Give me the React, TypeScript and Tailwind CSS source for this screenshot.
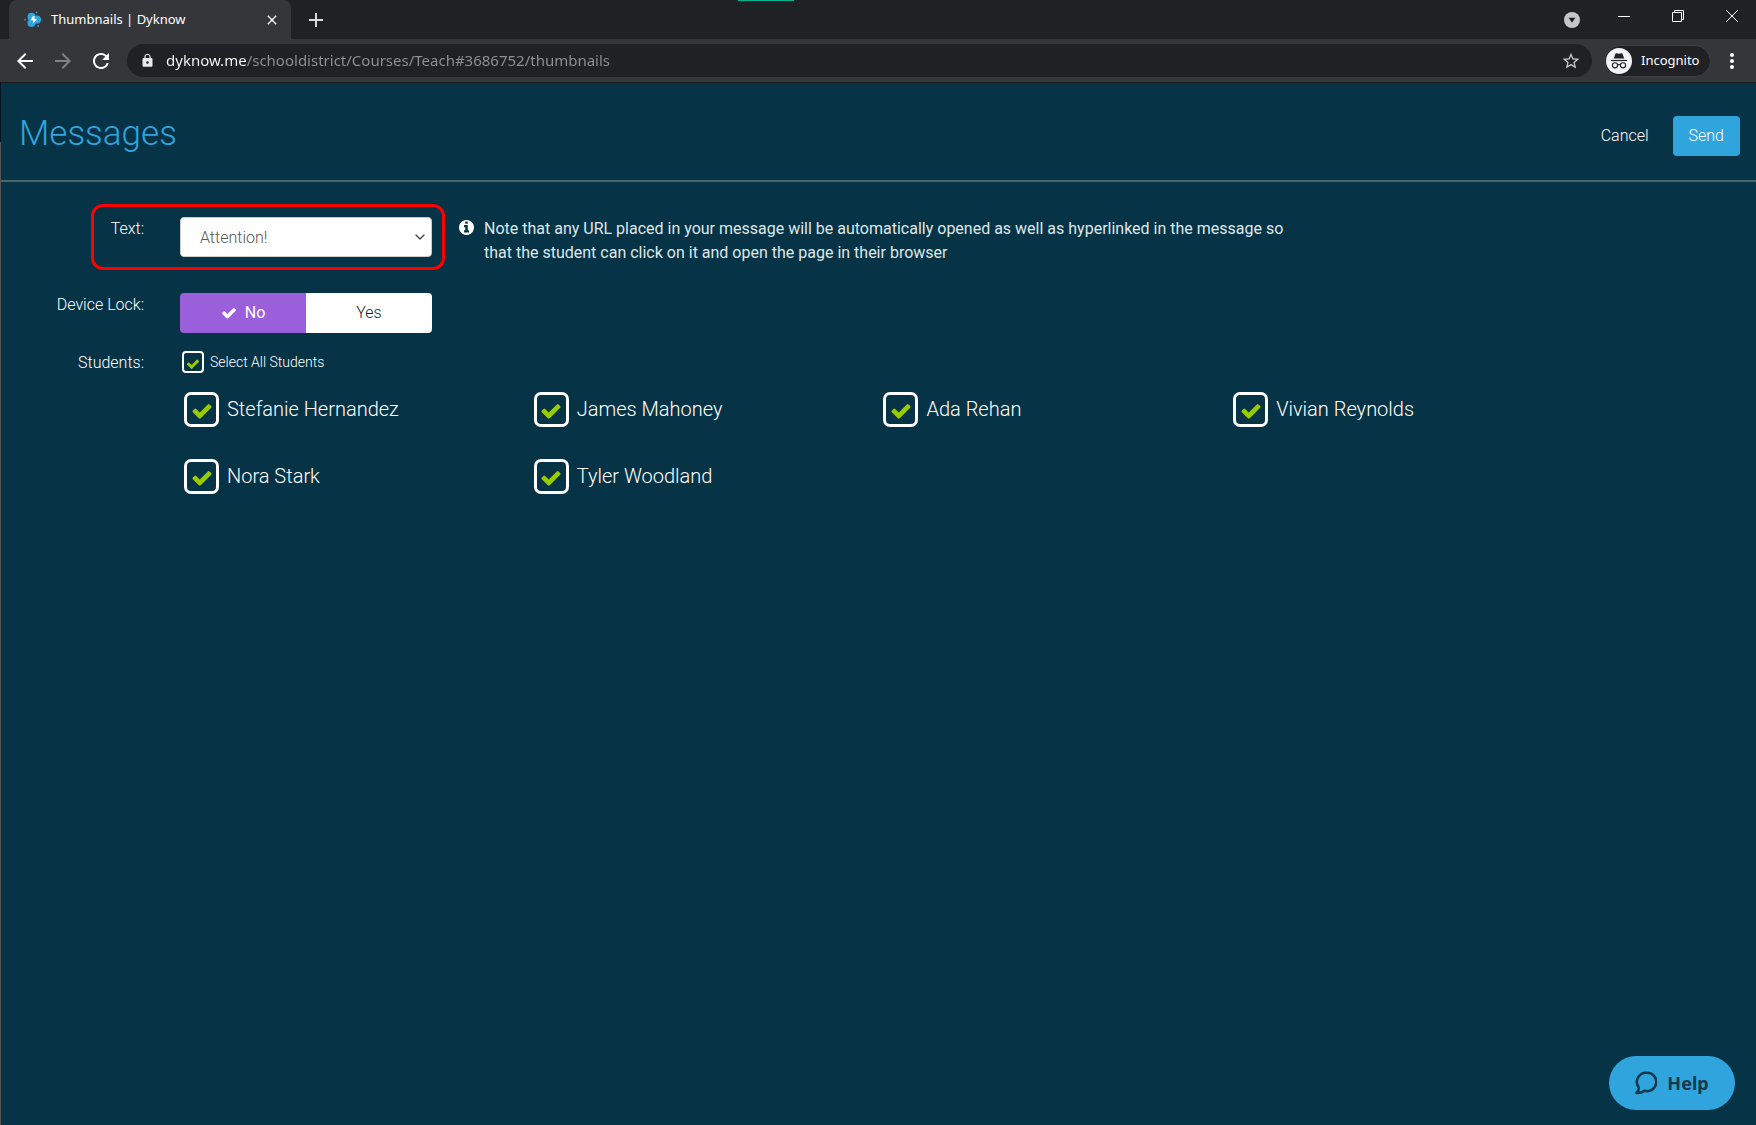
import React, { useState } from 'react'
import { ChevronDown } from 'lucide-react'
import { MdAdd, MdArrowBack, MdArrowForward, MdClose, MdLock, MdMoreVert, MdRefresh, MdStarBorder } from 'react-icons/md'

interface IconProps {
  className?: string;
}

const CheckIcon: React.FC<IconProps> = ({ className }) => (
  <svg viewBox="0 0 1792 1792" fill="currentColor" className={className} aria-hidden="true">
    <path d="M1671 566q0 40-28 68l-724 724-136 136q-28 28-68 28t-68-28l-136-136-362-362q-28-28-28-68t28-68l136-136q28-28 68-28t68 28l294 295 656-657q28-28 68-28t68 28l136 136q28 28 28 68z" />
  </svg>
);

const InfoIcon: React.FC<IconProps> = ({ className }) => (
  <svg viewBox="128 128 1536 1536" fill="currentColor" className={className} aria-hidden="true">
    <path d="M1152 1376v-160q0-14-9-23t-23-9h-96v-512q0-14-9-23t-23-9h-320q-14 0-23 9t-9 23v160q0 14 9 23t23 9h96v320h-96q-14 0-23 9t-9 23v160q0 14 9 23t23 9h448q14 0 23-9t9-23zm-128-896v-160q0-14-9-23t-23-9h-192q-14 0-23 9t-9 23v160q0 14 9 23t23 9h192q14 0 23-9t9-23zm640 416q0 209-103 385.5t-279.5 279.5-385.5 103-385.5-103-279.5-279.5-103-385.5 103-385.5 279.5-279.5 385.5-103 385.5 103 279.5 279.5 103 385.5z" />
  </svg>
);

const DyknowLogo: React.FC<IconProps> = ({ className }) => (
  <svg viewBox="0 0 18 18" className={className} aria-hidden="true">
    <g fill="#2fa4dd">
      <circle cx="7.5" cy="5.8" r="4" />
      <circle cx="13" cy="8.6" r="4.2" />
      <circle cx="7.5" cy="12" r="4" />
      <circle cx="12.5" cy="1.4" r="0.9" />
      <circle cx="1.2" cy="8.6" r="0.9" />
      <circle cx="14.2" cy="15" r="0.9" />
    </g>
    <path d="M9.2 4.8L6.4 9.2l3 .4-.6 3.2 4.2-4.4-2.8-.6.6-2.6z" fill="#fff" />
  </svg>
);

const IncognitoIcon: React.FC<IconProps> = ({ className }) => (
  <svg viewBox="0 0 26 26" className={className} aria-hidden="true">
    <circle cx="13" cy="13" r="13" fill="#f1f3f4" />
    <path d="M9.6 5.6q.2-.6.9-.4l2.5.6 2.5-.6q.7-.2.9.4l1.8 5H7.8z" fill="#202124" />
    <path d="M5 12.5h16" stroke="#202124" strokeWidth="1.2" />
    <g fill="none" stroke="#202124" strokeWidth="1.1">
      <circle cx="9" cy="17.3" r="2.6" />
      <circle cx="17" cy="17.3" r="2.6" />
      <path d="M11.6 17q1.4-.9 2.8 0" />
    </g>
  </svg>
);

const BrowserChrome: React.FC = () => {
  return (
    <header className="text-white font-['Noto_Sans',sans-serif]">
      <div className="relative flex h-[39px] bg-[#202124] pl-[9px]">
        <div className="absolute left-[42%] top-0 h-px w-14 bg-[#00b294]" />
        <div className="flex w-[282px] items-center rounded-t-lg bg-[#35363a] pl-[15px] pr-[11px]">
          <DyknowLogo className="size-[18px]" />
          <span className="ml-[9px] flex-1 text-[13px]">Thumbnails | Dyknow</span>
          <button aria-label="Close tab"><MdClose className="size-4" /></button>
        </div>
        <button aria-label="New tab" className="ml-[13px] text-[#dadce0]"><MdAdd className="size-6" /></button>
        <div className="ml-auto flex">
          <button aria-label="Search tabs" className="mr-3 px-2">
            <svg viewBox="0 0 16 16" className="size-4">
              <circle cx="8" cy="8" r="8" fill="#c4c7ca" />
              <path d="M4.6 5.8h6.8L8 10.8z" fill="#202124" />
            </svg>
          </button>
          <button aria-label="Minimize" className="flex w-12 justify-center pt-[10px]">
            <svg viewBox="0 0 12 12" className="size-3"><path d="M0 6.5h12" stroke="#fff" /></svg>
          </button>
          <button aria-label="Restore" className="flex w-[59px] justify-center pt-[10px]">
            <svg viewBox="0 0 12 12" className="size-3" fill="none" stroke="#fff">
              <path d="M.5 2.5h9v9h-9zM2.5 2.5v-2h9v9h-2" />
            </svg>
          </button>
          <button aria-label="Close" className="flex w-[49px] justify-center pt-[10px]">
            <svg viewBox="0 0 12 12" className="size-3"><path d="M0 0l12 12M12 0L0 12" stroke="#fff" /></svg>
          </button>
        </div>
      </div>
      <div className="flex h-11 items-center border-b border-[#1c1d20] bg-[#35363a] pl-[13px] pr-3">
        <button aria-label="Back"><MdArrowBack className="size-6" /></button>
        <button aria-label="Forward" className="ml-[14px] text-[#808185]"><MdArrowForward className="size-6" /></button>
        <button aria-label="Reload" className="ml-[14px]"><MdRefresh className="size-6" /></button>
        <div className="ml-[14px] flex h-[33px] flex-1 items-center rounded-full bg-[#202124] pl-[13px] pr-[11px]">
          <MdLock className="size-[15px] text-[#e8eaed]" />
          <input
            aria-label="Address"
            defaultValue="dyknow.me/schooldistrict/Courses/Teach#3686752/thumbnails"
            className="ml-[11px] flex-1 bg-linear-to-r from-white from-[81px] to-[#8f9195] to-[81px] bg-clip-text text-[15px] text-transparent outline-none"
          />
          <button aria-label="Bookmark"><MdStarBorder className="size-5 text-[#c4c7ca]" /></button>
        </div>
        <button className="ml-3 flex h-8 w-[107px] items-center rounded-full border border-[#3f4044] bg-[#202124] pl-px text-[13px]">
          <IncognitoIcon className="size-[26px]" />
          <span className="ml-[9px]">Incognito</span>
        </button>
        <button aria-label="Menu" className="ml-[9px]"><MdMoreVert className="size-6" /></button>
      </div>
    </header>
  );
};

interface CheckboxProps {
  label: string;
  checked: boolean;
  onChange: (checked: boolean) => void;
  small?: boolean;
}

const Checkbox: React.FC<CheckboxProps> = ({ label, checked, onChange, small }) => {
  return (
    <label className={`flex items-center ${small ? 'gap-[6px] text-[14px]' : 'gap-2 text-[20px]'}`}>
      <span className="grid place-items-center">
        <input
          type="checkbox"
          checked={checked}
          onChange={(e) => onChange(e.target.checked)}
          className={`col-start-1 row-start-1 appearance-none border-white ${small ? 'size-[22px] rounded-[4px] border-2' : 'size-[35px] rounded-[7px] border-[3px]'}`}
        />
        {checked && (
          <CheckIcon className={`pointer-events-none col-start-1 row-start-1 mt-[3px] text-[#99cc00] ${small ? 'size-[14px]' : 'size-[22px]'}`} />
        )}
      </span>
      <span className={small ? '' : 'pb-[2px]'}>{label}</span>
    </label>
  );
};

const students = ['Stefanie Hernandez', 'James Mahoney', 'Ada Rehan', 'Vivian Reynolds', 'Nora Stark', 'Tyler Woodland'];

const App: React.FC = () => {
  const [locked, setLocked] = useState(false);
  const [selected, setSelected] = useState<string[]>(students);

  const toggle = (name: string, on: boolean) => {
    setSelected(on ? [...selected, name] : selected.filter((s) => s !== name));
  };

  return (
    <div className="flex min-h-screen flex-col bg-[#073346]">
      <BrowserChrome />
      <div className="flex flex-1">
        <div className="w-px bg-[#565656]">
          <div className="h-[59px] bg-[#03141c]" />
        </div>
        <main className="flex-1 font-[Roboto,sans-serif] text-[16px] font-light text-white">
          <div className="flex h-[99px] items-center justify-between border-b-2 border-[#49666f] pl-[18px] pr-4">
            <h1 className="pt-[5px] text-[35px] text-[#2fa4dd]">Messages</h1>
            <div className="flex items-center gap-6 pt-2">
              <button>Cancel</button>
              <button className="h-10 rounded bg-[#2fa4dd] px-4">Send</button>
            </div>
          </div>

          <form className="pt-[35px]" onSubmit={(e) => e.preventDefault()}>
            <div className="relative flex items-start">
              <div className="pointer-events-none absolute -top-[13px] left-[90px] h-[66px] w-[354px] rounded-xl border-[3px] border-[#ff0000]" />
              <label htmlFor="message" className="w-[143px] text-right leading-6">Text:</label>
              <div className="relative ml-9 w-[252px]">
                <select id="message" className="h-10 w-full appearance-none rounded border border-[#cccccc] bg-white pl-[19px] pt-px text-[#555555]">
                  <option>Attention!</option>
                </select>
                <ChevronDown className="pointer-events-none absolute right-1 top-3 size-4 text-[#444444]" strokeWidth={2} />
              </div>
              <InfoIcon className="ml-[27px] mt-[3px] size-[15px]" />
              <p className="ml-[10px] max-w-[820px] font-normal leading-6 text-[#dfe7ea]">
                Note that any URL placed in your message will be automatically opened as well as hyperlinked in the message so that the student can click on it and open the page in their browser
              </p>
            </div>

            <fieldset className="mt-7 flex items-start">
              <span className="w-[143px] text-right leading-6">Device Lock:</span>
              <div className="ml-9 flex h-10 w-[252px] overflow-hidden rounded">
                {[false, true].map((value) => (
                  <label
                    key={String(value)}
                    className={`flex flex-1 items-center justify-center gap-2 ${locked === value ? 'bg-[#9b5fdc] font-normal text-white' : 'bg-white text-[#222222]'}`}
                  >
                    <input type="radio" name="lock" className="sr-only" checked={locked === value} onChange={() => setLocked(value)} />
                    {locked === value && <CheckIcon className="size-4" />}
                    {value ? 'Yes' : 'No'}
                  </label>
                ))}
              </div>
            </fieldset>

            <div className="mt-[18px] flex items-start">
              <span className="w-[143px] text-right leading-6">Students:</span>
              <div className="ml-[38px] flex-1">
                <Checkbox
                  small
                  label="Select All Students"
                  checked={selected.length === students.length}
                  onChange={(on) => setSelected(on ? students : [])}
                />
                <div className="mr-[11%] mt-[19px] grid grid-cols-4 gap-y-8 pl-[2px]">
                  {students.map((name) => (
                    <Checkbox key={name} label={name} checked={selected.includes(name)} onChange={(on) => toggle(name, on)} />
                  ))}
                </div>
              </div>
            </div>
          </form>
        </main>
      </div>

      <button className="fixed bottom-[15px] right-[21px] flex h-[54px] w-[126px] items-center justify-center gap-[10px] rounded-full bg-[#2fa4dd] font-['Noto_Sans',sans-serif] text-[18px] font-bold text-[#17394a]">
        <svg viewBox="0 0 22 24" className="h-6 w-[22px]" fill="none" stroke="currentColor" strokeWidth="2.6" strokeLinejoin="round" aria-hidden="true">
          <path d="M11.5 1.8a9.2 9.2 0 1 1-2 18q-3.600 2.400-8 2.100 2.600-2 2.300-5.300a9.200 9.200 0 0 1 7.700-14.800z" />
        </svg>
        Help
      </button>
    </div>
  );
};

export default App;
